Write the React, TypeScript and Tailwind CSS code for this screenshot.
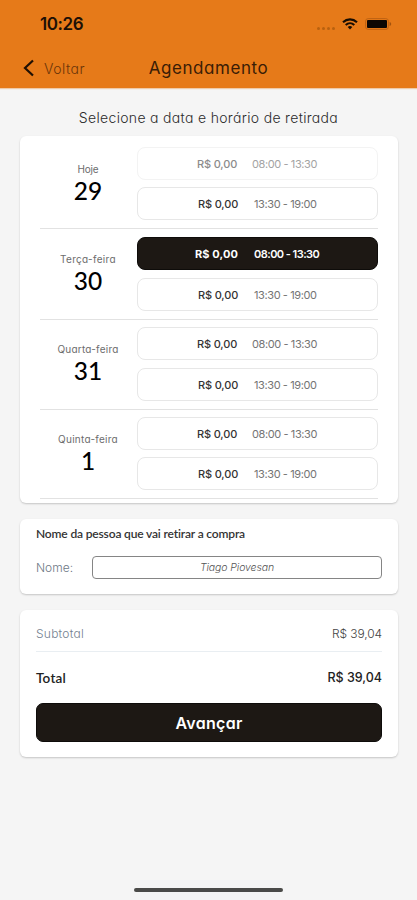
import { clsx } from 'clsx'

type Slot = {
  price: string
  time: string
  late?: boolean
  state?: 'disabled' | 'selected'
}

type Day = {
  label: string
  date: string
  slots: Slot[]
  rowClass: string
  gapClass: string
  labelClass: string
}

const MORNING: Slot = { price: 'R$ 0,00', time: '08:00 - 13:30' }
const AFTERNOON: Slot = { price: 'R$ 0,00', time: '13:30 - 19:00', late: true }

const DAYS: Day[] = [
  {
    label: 'Hoje',
    date: '29',
    slots: [{ ...MORNING, state: 'disabled' }, AFTERNOON],
    rowClass: 'h-[93px] pt-[11px]',
    gapClass: 'gap-[7px]',
    labelClass: 'mt-[15px] tracking-[-0.2px]',
  },
  {
    label: 'Terça-feira',
    date: '30',
    slots: [{ ...MORNING, state: 'selected' }, AFTERNOON],
    rowClass: 'h-[91px] pt-2',
    gapClass: 'gap-2',
    labelClass: 'mt-[15px] tracking-[0.3px]',
  },
  {
    label: 'Quarta-feira',
    date: '31',
    slots: [MORNING, AFTERNOON],
    rowClass: 'h-[90px] pt-[7px]',
    gapClass: 'gap-2',
    labelClass: 'mt-[15px] tracking-[0.22px]',
  },
  {
    label: 'Quinta-feira',
    date: '1',
    slots: [MORNING, AFTERNOON],
    rowClass: 'h-[89px] pt-[7px]',
    gapClass: 'gap-[7px]',
    labelClass: 'mt-[15px] tracking-[0.25px]',
  },
]

function StatusBar() {
  return (
    <div className="flex h-12 items-center justify-between pl-10 pr-[25px]">
      <span className="text-[17px] font-semibold leading-6 tracking-[-0.4px] text-[#1d1006]">10:26</span>
      <div className="flex items-center">
        <div className="mr-[7px] mt-[8px] flex gap-[2px]">
          {[0, 1, 2, 3].map((dot) => (
            <span key={dot} className="size-[3px] rounded-full bg-[#b9610f]" />
          ))}
        </div>
        <svg width="16" height="12" viewBox="0 0 16 12" fill="none" stroke="#170c02" strokeWidth="2.1" aria-hidden="true">
          <path d="M1 4.2C5 .4 11 .4 15 4.2" />
          <path d="M3.7 7C6.2 4.7 9.8 4.7 12.3 7" />
          <path d="M5.7 8.9Q8 7.2 10.3 8.9L8 11.4Z" fill="#170c02" stroke="none" />
        </svg>
        <svg className="ml-[7px]" width="27" height="12" viewBox="0 0 27 12" aria-hidden="true">
          <rect x=".6" y=".6" width="22.8" height="10.8" rx="2.6" fill="none" stroke="#bd6212" />
          <rect x="2" y="2" width="20" height="8" rx="1" fill="#0c0703" />
          <path d="M24.6 4v4c1-.4 1.6-1.1 1.6-2s-.6-1.600-1.600-2Z" fill="#a4530d" />
        </svg>
      </div>
    </div>
  )
}

function SlotButton({ price, time, late, state }: Slot) {
  return (
    <button
      type="button"
      disabled={state === 'disabled'}
      className={clsx(
        'flex h-[33px] w-full items-center rounded-[8px] border text-[11px] leading-4 whitespace-nowrap',
        state === 'selected' ? 'border-[#0e0c0a] bg-[#1d1814] pl-[57px] font-bold text-white' : 'bg-white',
        state === 'disabled' && 'border-[#f3f3f3] text-[#8b8b8b]',
        !state && 'border-[#e7e7e7] text-[#333]',
        state !== 'selected' && (late ? 'pl-[60px]' : 'pl-[59px]'),
      )}
    >
      <span
        className={clsx(
          state === 'selected' ? 'w-[59px] tracking-[0.1px]' : 'font-medium tracking-[-0.15px]',
          state !== 'selected' && (late ? 'w-14' : 'w-[55px]'),
          'text-left',
        )}
      >
        {price}
      </span>
      <span
        className={clsx(
          'tracking-[-0.4px]',
          state === 'selected' && 'font-semibold tracking-[-0.55px]',
          state === 'disabled' && 'text-[#a3a3a3]',
          !state && 'text-[#747474]',
        )}
      >
        {time}
      </span>
    </button>
  )
}

function DayRow({ label, date, slots, rowClass, gapClass, labelClass }: Day) {
  return (
    <div className={clsx('flex border-b border-[#e2e2e2]', rowClass)}>
      <div className="flex w-24 shrink-0 flex-col items-center">
        <span className={clsx('text-[10px] leading-[14px] text-[#6c6c6c]', labelClass)}>{label}</span>
        <span className="mt-px font-['Lato'] text-[24.5px] font-medium leading-[28px] text-black">{date}</span>
      </div>
      <div className={clsx('ml-px flex flex-1 flex-col', gapClass)}>
        {slots.map((slot) => (
          <SlotButton key={slot.time} {...slot} />
        ))}
      </div>
    </div>
  )
}

const CARD = 'ml-5 mr-[19px] rounded-[6px] bg-white shadow-[0_1px_2px_rgba(0,0,0,0.2)]'

export default function App() {
  return (
    <main className="flex h-[900px] w-[417px] flex-col overflow-hidden bg-[#f5f5f5] font-['Inter',sans-serif] [font-feature-settings:'cv11']">
      <header className="h-[88px] shrink-0 bg-[#e67a19] shadow-[0_1px_1px_rgba(230,122,25,0.35)]">
        <StatusBar />
        <div className="grid h-10 grid-cols-[1fr_auto_1fr] items-center">
          <button type="button" className="flex items-center pl-[23px] text-[#6b3509]">
            <svg width="12" height="18" viewBox="0 0 12 18" fill="none" stroke="#1f1004" strokeWidth="2.2" aria-hidden="true">
              <path d="M10 1.500 2 9l8 7.500" />
            </svg>
            <span className="ml-[9px] mt-px text-[14px] font-light leading-5 tracking-[0.5px]">Voltar</span>
          </button>
          <h1 className="text-[17px] font-normal leading-6 tracking-[0.55px] text-[#3a1d06]">Agendamento</h1>
        </div>
      </header>

      <p className="mt-[19px] text-center text-[14px] font-light leading-[22px] tracking-[0.32px] text-[#2b2b2b]">
        Selecione a data e horário de retirada
      </p>

      <section className={clsx(CARD, 'mt-[7px] h-[367px] shrink-0 px-5')}>
        {DAYS.map((day) => (
          <DayRow key={day.date} {...day} />
        ))}
      </section>

      <section className={clsx(CARD, 'mt-4 h-[75px] shrink-0 px-4 pt-[7px]')}>
        <h2 className="font-['Lato'] text-[12px] font-semibold leading-4 tracking-[-0.16px] text-[#333]">
          Nome da pessoa que vai retirar a compra
        </h2>
        <div className="mt-[14px] flex items-center">
          <label htmlFor="pickup-name" className="w-[56px] text-[12px] font-light leading-4 text-[#6d7885]">
            Nome:
          </label>
          <div
            id="pickup-name"
            className="flex h-[23px] flex-1 items-center justify-center rounded-[4px] border border-[#858585] text-[10.5px] font-light italic tracking-[-0.1px] text-[#555]"
          >
            Tiago Piovesan
          </div>
        </div>
      </section>

      <section className={clsx(CARD, 'mt-4 h-[147px] shrink-0 px-4')}>
        <div className="flex h-[42px] items-center justify-between border-b border-[#e9eef2] pt-[7px] text-[12px] font-light">
          <span className="tracking-[0.25px] text-[#748190]">Subtotal</span>
          <span className="tracking-[-0.1px] text-[#444]">R$ 39,04</span>
        </div>
        <div className="flex h-[51px] items-center justify-between pt-px text-[#222]">
          <span className="font-['Lato'] text-[13.5px] font-semibold tracking-[0.2px]">Total</span>
          <span className="text-[12.5px] font-medium">R$ 39,04</span>
        </div>
        <button type="button" className="h-[39px] w-full rounded-[7px] border border-[#0e0c0a] bg-[#1d1814] text-[16px] font-semibold leading-6 tracking-[0.3px] text-white">
          Avançar
        </button>
      </section>

      <div className="mx-auto mb-[8px] mt-auto h-1 w-[149px] rounded-full bg-[#4b4b49]" />
    </main>
  )
}
